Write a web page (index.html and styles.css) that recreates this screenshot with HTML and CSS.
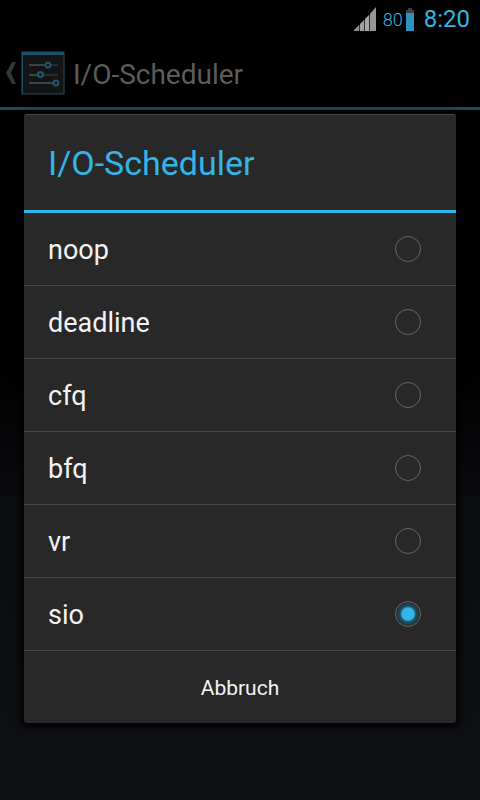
FILE: index.html
```html
<!DOCTYPE html>
<html lang="de">
<head>
  <meta charset="UTF-8">
  <meta name="viewport" content="width=device-width, initial-scale=1.0">
  <title>I/O-Scheduler</title>
  <link rel="stylesheet" href="styles.css">
</head>
<body>
  <div class="status-bar">
    <svg class="signal" width="22" height="24" viewBox="0 0 22 24" aria-hidden="true">
      <path d="M0 24V23L5 18V24Z" fill="#8c8c8c"/>
      <path d="M6 24V17L10 13V24Z" fill="#a0a0a0"/>
      <path d="M11 24V12L15 8V24Z" fill="#a8a8a8"/>
      <path d="M16 24V7L22 0V24Z" fill="#969696"/>
      <path d="M5.500 18V24M10.500 13V24M15.500 8V24" stroke="#303030"/>
    </svg>
    <span class="battery-level">80</span>
    <svg class="battery" width="8" height="23" viewBox="0 0 8 23" aria-hidden="true">
      <path d="M2 0H6V2H8V5H0V2H2Z" fill="#404040"/>
      <rect y="5" width="8" height="18" fill="#2a93bf"/>
    </svg>
    <span class="clock">8:20</span>
  </div>

  <header class="action-bar">
    <button class="up-btn" aria-label="Zurück">
      <svg width="10" height="22" viewBox="0 0 10 22">
        <path d="M6 0H10L5 11L10 22H6L0 11Z" fill="#30383b"/>
      </svg>
      <svg width="44" height="44" viewBox="0 0 44 44">
        <rect x="1" y="1" width="42" height="42" fill="#131416" stroke="#2b4a56"/>
        <rect x="1" y="1" width="42" height="3" fill="#1c5268"/>
        <path d="M1.500 4V42" stroke="#1c5268"/>
        <path d="M8 14H37M8 24H37M8 32H37" stroke="#3a4245" stroke-width="1"/>
        <path d="M8 14H24M8 24H17M8 32H32" stroke="#3c4346" stroke-width="2"/>
        <g fill="#131a1e" stroke="#1c5870" stroke-width="2">
          <circle cx="27" cy="14" r="2.500"/>
          <circle cx="19.500" cy="23.500" r="2.500"/>
          <circle cx="35" cy="32" r="2.500"/>
        </g>
      </svg>
    </button>
    <h1>I/O-Scheduler</h1>
  </header>

  <form class="dialog" role="dialog" aria-labelledby="dialog-title">
    <h2 id="dialog-title">I/O-Scheduler</h2>
    <label class="option">noop <input type="radio" name="scheduler" value="noop"></label>
    <label class="option">deadline <input type="radio" name="scheduler" value="deadline"></label>
    <label class="option">cfq <input type="radio" name="scheduler" value="cfq"></label>
    <label class="option">bfq <input type="radio" name="scheduler" value="bfq"></label>
    <label class="option">vr <input type="radio" name="scheduler" value="vr"></label>
    <label class="option">sio <input type="radio" name="scheduler" value="sio" checked></label>
    <button type="button" class="cancel-btn">Abbruch</button>
  </form>
</body>
</html>
```

FILE: styles.css
```css
* {
  box-sizing: border-box;
}

body {
  margin: 0;
  min-height: 100vh;
  background: linear-gradient(#000 45%, #0a0b0e 62%, #0f1014);
  font-family: Roboto, sans-serif;
  color: #f3f3f3;
}

.status-bar {
  display: flex;
  justify-content: flex-end;
  align-items: center;
  height: 38px;
  padding-right: 10px;
  color: #33b5e5;
}

.signal {
  margin-right: 7px;
}

.battery-level {
  margin-right: 3px;
  font-size: 18px;
  font-weight: 300;
}

.clock {
  margin-left: 10px;
  font-size: 24px;
}

.action-bar {
  display: flex;
  align-items: center;
  height: 72px;
  padding-left: 6px;
  border-bottom: 3px solid #1b485c;
}

.up-btn {
  display: flex;
  align-items: center;
  gap: 5px;
  padding: 0;
  background: none;
  border: none;
  cursor: pointer;
}

h1 {
  margin: 0;
  padding: 4px 0 0 8px;
  font-size: 28px;
  font-weight: 400;
  color: #5c5c5c;
}

.dialog {
  margin: 4px 24px 0;
  background: #282828;
  border-top: 1px solid #444;
  border-radius: 3px;
  box-shadow: 0 2px 6px 2px #000;
}

h2 {
  margin: 0;
  padding: 2px 24px 0;
  border-bottom: 3px solid #33b5e5;
  font-size: 34px;
  font-weight: 400;
  line-height: 93px;
  color: #33b5e5;
}

.option {
  display: flex;
  justify-content: space-between;
  align-items: center;
  height: 73px;
  padding: 2px 35px 0 24px;
  border-bottom: 1px solid #484848;
  font-size: 27px;
  cursor: pointer;
}

.option input {
  appearance: none;
  width: 26px;
  height: 26px;
  margin: 0 0 2px;
  border: 1px solid #666;
  border-radius: 50%;
}

.option input:checked {
  background: radial-gradient(circle, #33b5e5 6px, #1b4b5e 8px, #1f414e 10px, #282828 12px);
}

.cancel-btn {
  display: block;
  width: 100%;
  height: 72px;
  padding: 2px 0 0;
  background: none;
  border: none;
  font-family: inherit;
  font-size: 21px;
  color: #f3f3f3;
  cursor: pointer;
}
```
